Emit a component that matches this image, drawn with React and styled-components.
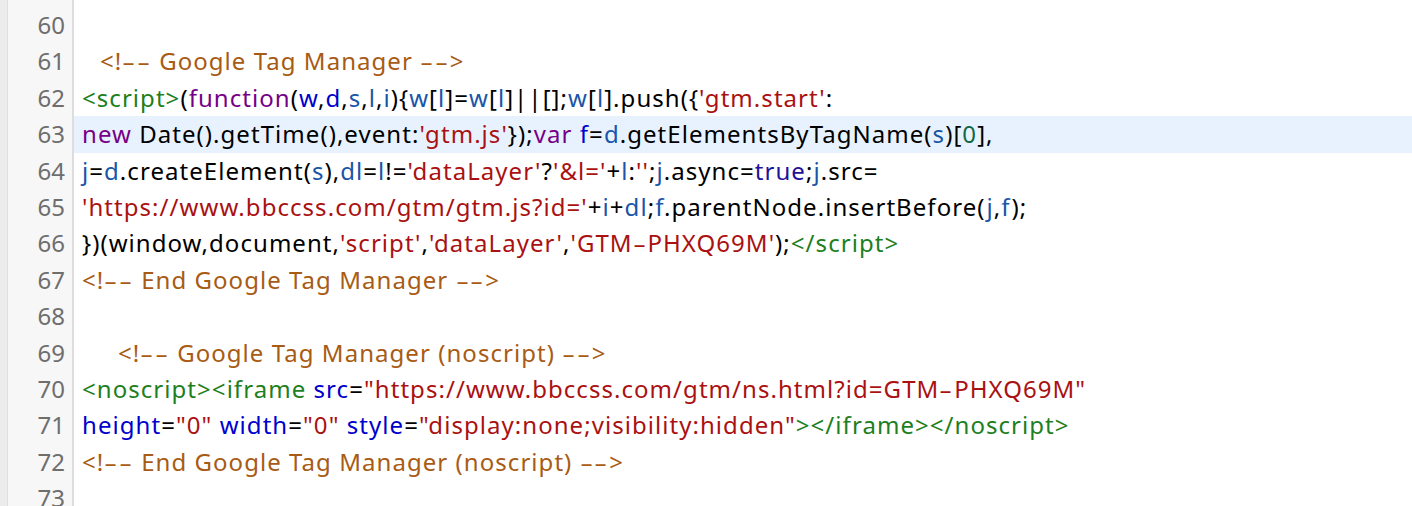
import React from 'react';
import styled, { createGlobalStyle } from 'styled-components';

const GlobalStyle = createGlobalStyle`
  html, body {
    margin: 0;
    padding: 0;
    background: #ffffff;
    overflow: hidden;
  }
`;

const Editor = styled.div`
  display: flex;
  height: 506px;
  overflow: hidden;
  font-family: 'Noto Sans', 'Liberation Sans', sans-serif;
  font-size: 24px;
  background: #ffffff;
`;

const Edge = styled.div`
  width: 7px;
  flex-shrink: 0;
  background: #ececec;
  border-right: 1px solid #e0e0e0;
`;

const Lines = styled.div`
  flex: 1;
  display: flex;
  flex-direction: column;
  padding-top: 7px;
  background: linear-gradient(to right, #f7f7f7 0, #f7f7f7 64px, #dddddd 64px, #dddddd 66px, #fff 66px);
`;

const Row = styled.div`
  display: flex;
  height: 36.4px;
  line-height: 36.4px;
  flex-shrink: 0;
`;

const Gutter = styled.div`
  width: 57px;
  padding-right: 7px;
  text-align: right;
  color: #6e6e6e;
  flex-shrink: 0;
  border-right: 2px solid #dddddd;
  background: #f7f7f7;
`;

const Code = styled.div`
  flex: 1;
  padding-left: ${(p) => 8 + (p.$indent || 0)}px;
  white-space: pre;
  letter-spacing: 1.05px;
  color: #000;
  background: ${(p) => (p.$active ? '#e8f2ff' : 'transparent')};
`;

const COLORS = {
  c: '#a85b14',
  t: '#1d7f1d',
  k: '#770088',
  d: '#0000cc',
  v: '#1a55a8',
  s: '#aa1111',
  a: '#221199',
  n: '#116644',
  at: '#0000cc',
};

const Tok = styled.span`
  color: ${(p) => COLORS[p.$t] || '#000'};
`;

// the editor font draws "-" as a long dash
const Dash = styled.span`
  display: inline-block;
  margin: 0 3px;
  transform: scaleX(1.7);
`;

function renderText(text) {
  if (!text.includes('-')) return text;
  return text.split(/(-)/).map((piece, i) =>
    piece === '-' ? <Dash key={i}>-</Dash> : piece
  );
}

const lines = [
  { n: 60, parts: [] },
  { n: 61, indent: 18, parts: [['c', '<!-- Google Tag Manager -->']] },
  {
    n: 62,
    parts: [
      ['t', '<script>'], ['', '('], ['k', 'function'], ['', '('],
      ['d', 'w'], ['', ','], ['d', 'd'], ['', ','], ['v', 's'], ['', ','], ['v', 'l'], ['', ','], ['v', 'i'],
      ['', '){'], ['v', 'w'], ['', '['], ['v', 'l'], ['', ']='], ['v', 'w'], ['', '['], ['v', 'l'],
      ['', ']||[];'], ['v', 'w'], ['', '['], ['v', 'l'], ['', '].push({'], ['s', "'gtm.start'"], ['', ':'],
    ],
  },
  {
    n: 63,
    active: true,
    parts: [
      ['k', 'new'], ['', ' Date().getTime(),event:'], ['s', "'gtm.js'"], ['', '});'], ['k', 'var'], ['', ' '],
      ['d', 'f'], ['', '='], ['v', 'd'], ['', '.getElementsByTagName('], ['v', 's'], ['', ')['], ['n', '0'], ['', '],'],
    ],
  },
  {
    n: 64,
    parts: [
      ['v', 'j'], ['', '='], ['v', 'd'], ['', '.createElement('], ['v', 's'], ['', '),'], ['v', 'dl'], ['', '='],
      ['v', 'l'], ['', '!='], ['s', "'dataLayer'"], ['', '?'], ['s', "'&l='"], ['', '+'], ['v', 'l'], ['', ':'],
      ['s', "''"], ['', ';'], ['v', 'j'], ['', '.async='], ['a', 'true'], ['', ';'], ['v', 'j'], ['', '.src='],
    ],
  },
  {
    n: 65,
    parts: [
      ['s', "'https://www.bbccss.com/gtm/gtm.js?id='"], ['', '+'], ['v', 'i'], ['', '+'], ['v', 'dl'], ['', ';'],
      ['v', 'f'], ['', '.parentNode.insertBefore('], ['v', 'j'], ['', ','], ['v', 'f'], ['', ');'],
    ],
  },
  {
    n: 66,
    parts: [
      ['', '})(window,document,'], ['s', "'script'"], ['', ','], ['s', "'dataLayer'"], ['', ','],
      ['s', "'GTM-PHXQ69M'"], ['', ');'], ['t', '</script>'],
    ],
  },
  { n: 67, parts: [['c', '<!-- End Google Tag Manager -->']] },
  { n: 68, parts: [] },
  { n: 69, indent: 36, parts: [['c', '<!-- Google Tag Manager (noscript) -->']] },
  {
    n: 70,
    parts: [
      ['t', '<noscript><iframe'], ['', ' '], ['at', 'src'], ['', '='],
      ['s', '"https://www.bbccss.com/gtm/ns.html?id=GTM-PHXQ69M"'],
    ],
  },
  {
    n: 71,
    parts: [
      ['at', 'height'], ['', '='], ['s', '"0"'], ['', ' '], ['at', 'width'], ['', '='], ['s', '"0"'], ['', ' '],
      ['at', 'style'], ['', '='], ['s', '"display:none;visibility:hidden"'], ['t', '></iframe></noscript>'],
    ],
  },
  { n: 72, parts: [['c', '<!-- End Google Tag Manager (noscript) -->']] },
  { n: 73, parts: [] },
];

export default function App() {
  return (
    <>
      <GlobalStyle />
      <Editor>
        <Edge />
        <Lines>
          {lines.map((line) => (
            <Row key={line.n}>
              <Gutter>{line.n}</Gutter>
              <Code $indent={line.indent} $active={line.active}>
                {line.parts.map(([t, text], i) => (
                  <Tok key={i} $t={t}>
                    {renderText(text)}
                  </Tok>
                ))}
              </Code>
            </Row>
          ))}
        </Lines>
      </Editor>
    </>
  );
}
